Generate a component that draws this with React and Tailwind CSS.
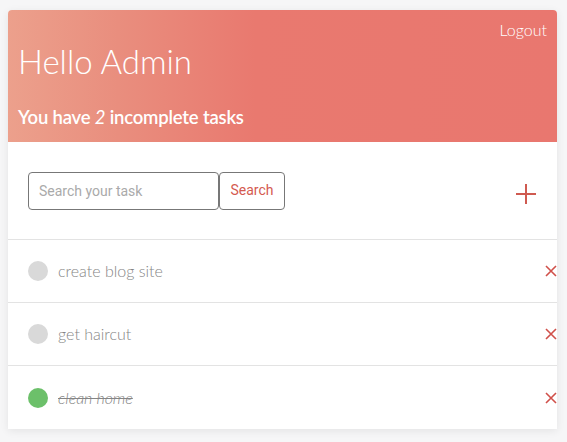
import { useState } from "react";

const initialTasks = [
  { id: 1, title: "create blog site", done: false },
  { id: 2, title: "get haircut", done: false },
  { id: 3, title: "clean home", done: true },
];

export default function App() {
  const [tasks, setTasks] = useState(initialTasks);
  const [query, setQuery] = useState("");

  const remaining = tasks.filter(t => !t.done).length;

  function toggle(id) {
    setTasks(tasks.map(t => (t.id === id ? { ...t, done: !t.done } : t)));
  }

  function remove(id) {
    setTasks(tasks.filter(t => t.id !== id));
  }

  return (
    <div className="min-h-[442px] bg-[#f6f6f7] px-2 pt-[10px] font-['Lato',sans-serif]">
      <div className="bg-white rounded-t shadow-[0_2px_8px_rgba(0,0,0,0.08)] w-[549px]">
        {/* HEADER */}
        <div className="h-[132px] rounded-t bg-[linear-gradient(90deg,#eca08c_0%,#e98e7e_20%,#e9796f_45%,#e9776f_100%)] text-white px-[10px] pt-[10px] flex flex-col">
          <div className="flex justify-end">
            <button className="text-[16px] font-light leading-[20px]">Logout</button>
          </div>
          <h1 className="text-[33px] font-light leading-[40px] mt-[1px]">Hello Admin</h1>
          <p className="text-[18.5px] font-semibold mt-[24px] leading-[24px] tracking-[-0.2px]">
            You have <em className="font-normal">{remaining}</em> incomplete tasks
          </p>
        </div>

        {/* SEARCH */}
        <div className="h-[98px] flex items-center px-5 border-b border-[#e3e3e3]">
          <input
            className="w-[191px] h-[38px] border border-[#777] rounded-[4px] px-[10px] text-[14px] font-['Roboto',sans-serif] placeholder:text-[#aaa] outline-none"
            placeholder="Search your task"
            value={query}
            onChange={e => setQuery(e.target.value)}
          />
          <button className="h-[38px] w-[66px] border border-[#777] rounded-[4px] text-[14px] text-[#d45a50] font-['Roboto',sans-serif]">
            Search
          </button>
          <button className="ml-auto mt-[6px]">
            <svg width="22" height="22" viewBox="0 0 22 22" stroke="#cf5a50" strokeWidth="2">
              <path d="M11 1v20M1 11h20" />
            </svg>
          </button>
        </div>

        {/* LIST */}
        {tasks
          .filter(t => t.title.includes(query))
          .map((t, i, arr) => (
            <div
              key={t.id}
              className={
                "flex items-center h-[63px] pl-5 " +
                (i < arr.length - 1 ? "border-b border-[#e3e3e3]" : "")
              }
            >
              <button
                onClick={() => toggle(t.id)}
                className={
                  "w-5 h-5 rounded-full " +
                  (t.done ? "bg-[#6cc06a]" : "bg-[#d9d9d9]")
                }
              />
              <span
                className={
                  "ml-[10px] text-[16px] font-light text-[#858585] " +
                  (t.done ? "line-through italic text-[#777]" : "")
                }
              >
                {t.title}
              </span>
              <button onClick={() => remove(t.id)} className="ml-auto">
                <svg width="12" height="12" viewBox="0 0 12 12" stroke="#d0504a" strokeWidth="1.6">
                  <path d="M1 1l10 10M11 1L1 11" />
                </svg>
              </button>
            </div>
          ))}
      </div>
    </div>
  );
}
